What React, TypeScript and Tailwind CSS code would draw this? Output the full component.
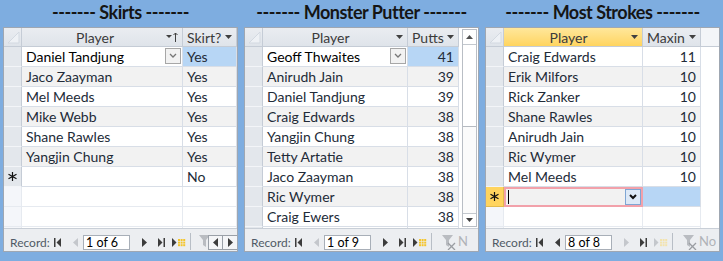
import React from "react";

const font = "font-['Lato','Open_Sans',sans-serif]";

function DownTri({ className = "" }: { className?: string }) {
  return (
    <svg width="7" height="4" viewBox="0 0 7 4" className={className}>
      <path d="M0 0h7L3.5 4z" fill="#404040" />
    </svg>
  );
}

function SortAsc() {
  return (
    <svg width="12" height="10" viewBox="0 0 12 10">
      <path d="M0 3h6L3 6z" fill="#404040" />
      <path d="M9.5 1v9M7.5 3l2-2 2 2" stroke="#404040" strokeWidth="1" fill="none" />
    </svg>
  );
}

function Chevron({ bold = false }: { bold?: boolean }) {
  return (
    <svg width="8" height="6" viewBox="0 0 8 6">
      <path
        d="M1 1l3 3 3-3"
        stroke={bold ? "#111" : "#777"}
        strokeWidth={bold ? 2 : 1.3}
        fill="none"
      />
    </svg>
  );
}

function Corner() {
  return (
    <svg width="17" height="18" viewBox="0 0 17 18">
      <path d="M4 15L15 4v11z" fill="#eef1f5" stroke="#d3d9e1" strokeWidth="1" />
    </svg>
  );
}

function Star() {
  return (
    <svg width="11" height="11" viewBox="0 0 11 11">
      <path d="M5.5 1v9M1.5 3.2l8 4.6M1.5 7.8l8-4.6" stroke="#111" strokeWidth="1.2" />
    </svg>
  );
}

function NavIcon({ kind, on }: { kind: string; on: boolean }) {
  const c = on ? "#3c3c3c" : "#c4c7cc";
  if (kind === "first")
    return (
      <svg width="7" height="9" viewBox="0 0 7 9">
        <rect x="0" y="0" width="1.5" height="9" fill={c} />
        <path d="M7 0v9L2.5 4.5z" fill={c} />
      </svg>
    );
  if (kind === "prev")
    return (
      <svg width="5" height="9" viewBox="0 0 5 9">
        <path d="M5 0v9L0 4.5z" fill={c} />
      </svg>
    );
  if (kind === "next")
    return (
      <svg width="5" height="9" viewBox="0 0 5 9">
        <path d="M0 0v9L5 4.5z" fill={c} />
      </svg>
    );
  if (kind === "last")
    return (
      <svg width="7" height="9" viewBox="0 0 7 9">
        <path d="M0 0v9L4.5 4.5z" fill={c} />
        <rect x="5.5" y="0" width="1.5" height="9" fill={c} />
      </svg>
    );
  const y = on ? "#f4c52c" : "#f3e3ad";
  return (
    <svg width="14" height="9" viewBox="0 0 14 9">
      <path d="M0 0v9L4.5 4.5z" fill={c} />
      {[0, 1, 2].map((r) =>
        [0, 1, 2].map((q) => (
          <rect key={`${r}${q}`} x={6 + q * 2.6} y={1 + r * 2.6} width="2" height="2" fill={y} />
        ))
      )}
    </svg>
  );
}

function Funnel({ x = false }: { x?: boolean }) {
  return (
    <svg width="16" height="16" viewBox="0 0 16 16">
      <path d="M1 1h11L8 6v7l-3-2V6z" fill="#b9bcc1" />
      {x && <path d="M7 9l7 7M14 9l-7 7" stroke="#9a9da2" strokeWidth="1.3" />}
    </svg>
  );
}

function RecordBar({
  text,
  first,
  prev,
  next,
  last,
  add,
  tail,
}: {
  text: string;
  first: boolean;
  prev: boolean;
  next: boolean;
  last: boolean;
  add: boolean;
  tail: React.ReactNode;
}) {
  return (
    <div className="h-[23px] shrink-0 border-t border-[#c9cfd7] bg-[#eceef1] flex items-end pb-[1px] overflow-hidden">
      <span className="ml-[6px] w-[44px] shrink-0 text-[12px] text-[#505a66] leading-[16px] self-center mt-[6px]">
        Record:
      </span>
      <div className="w-[7px] shrink-0 flex self-center mt-[6px]"><NavIcon kind="first" on={first} /></div>
      <div className="w-[5px] shrink-0 ml-[12px] flex self-center mt-[6px]"><NavIcon kind="prev" on={prev} /></div>
      <div className="w-[47px] shrink-0 h-[15px] ml-[5px] bg-white border border-[#a8afb8] text-[12.5px] text-black leading-[13px] pl-[2px]">
        {text}
      </div>
      <div className="w-[5px] shrink-0 ml-[12px] flex self-center mt-[6px]"><NavIcon kind="next" on={next} /></div>
      <div className="w-[7px] shrink-0 ml-[11px] flex self-center mt-[6px]"><NavIcon kind="last" on={last} /></div>
      <div className="w-[14px] shrink-0 ml-[7px] flex self-center mt-[6px]"><NavIcon kind="add" on={add} /></div>
      <div className="w-[1px] shrink-0 h-[17px] ml-[4px] bg-[#b8bec6]" />
      {tail}
    </div>
  );
}

type Cell = { text?: string; right?: boolean; blue?: boolean; combo?: boolean; focus?: boolean };

function DataRow({
  sel,
  cells,
  widths,
  alt,
  extra,
  filler,
}: {
  sel?: "star" | "none";
  cells: Cell[];
  widths: string[];
  alt?: boolean;
  extra?: string;
  filler?: boolean;
}) {
  return (
    <div className="h-[20px] shrink-0 flex">
      <div
        className={`w-[18px] shrink-0 border-r border-b flex items-center justify-center ${
          filler
            ? "bg-[#f4f6fa] border-[#e6eaf0]"
            : "bg-[#e3e7ec] border-r-[#c5ccd6] border-b-[#f3f5f8]"
        }`}
      >
        {sel === "star" ? <Star /> : null}
      </div>
      {cells.map((c, i) => (
        <div
          key={i}
          className={`${widths[i]} shrink-0 border-r border-b ${
            filler ? "border-[#e6eaf0]" : "border-[#d8dee7]"
          } flex items-center relative ${
            c.blue ? "bg-[#b7d6f5]" : alt ? "bg-[#f2f2f2]" : "bg-white"
          } ${c.right ? "justify-end pr-[4px]" : "pl-[4px]"} ${c.focus ? "text-black" : "text-[#222b38]"}`}
        >
          <span className="whitespace-nowrap">{c.text}</span>
          {c.combo && (
            <div className="absolute right-[1px] top-[1px] w-[16px] h-[16px] border border-[#a7a7a7] bg-[#f2f2f2] flex items-center justify-center">
              <Chevron />
            </div>
          )}
        </div>
      ))}
      {extra && <div className={`${extra} shrink-0 bg-white`} />}
    </div>
  );
}

function Header({
  widths,
  labels,
  sortFirst,
  hlFirst,
  extra,
}: {
  widths: string[];
  labels: string[];
  sortFirst?: boolean;
  hlFirst?: boolean;
  extra?: string;
}) {
  return (
    <div className="h-[19px] shrink-0 flex border-b border-[#c5ccd6] bg-gradient-to-b from-[#eaedf1] to-[#dfe4ea] text-[#3b3b3b]">
      <div className="w-[18px] shrink-0 border-r border-[#c5ccd6] flex items-end justify-end overflow-hidden">
        <Corner />
      </div>
      {labels.map((l, i) => (
        <div
          key={l + i}
          className={`${widths[i]} shrink-0 border-r border-[#c5ccd6] flex items-center pr-[4px] ${
            i === 0 && hlFirst ? "bg-gradient-to-b from-[#ffe79a] to-[#ffd45e]" : ""
          }`}
        >
          {i === 0 ? (
            <span className="flex-1 text-center pl-[2px]">{l}</span>
          ) : (
            <span className="flex-1 pl-[4px] whitespace-nowrap overflow-hidden">{l}</span>
          )}
          {i === 0 && sortFirst ? <SortAsc /> : <DownTri />}
        </div>
      ))}
      {extra && <div className={`${extra} shrink-0 bg-[#f3f5f8]`} />}
    </div>
  );
}

function Panel({
  title,
  children,
  bar,
}: {
  title: string;
  children: React.ReactNode;
  bar: React.ReactNode;
}) {
  return (
    <div className="w-[235px] shrink-0 flex flex-col">
      <div className="h-[27px] flex items-center justify-center font-bold text-[18px] tracking-[-0.5px] text-[#151515] leading-none pb-[3px] whitespace-nowrap">
        {title}
      </div>
      <div className="h-[225px] border border-[#9fa7b2] bg-white flex flex-col overflow-hidden text-[14px]">
        <div className="flex-1 flex overflow-hidden">{children}</div>
        {bar}
      </div>
    </div>
  );
}

function Fillers({ widths, n, extra }: { widths: string[]; n: number; extra?: string }) {
  return (
    <>
      {Array.from({ length: n }).map((_, i) => (
        <DataRow key={i} filler cells={widths.map(() => ({}))} widths={widths} extra={extra} />
      ))}
    </>
  );
}

export default function App() {
  const w1 = ["w-[161px]", "w-[54px]"];
  const skirts = ["Daniel Tandjung", "Jaco Zaayman", "Mel Meeds", "Mike Webb", "Shane Rawles", "Yangjin Chung"];

  const w2 = ["w-[145px]", "w-[51px]"];
  const putts: [string, string][] = [
    ["Geoff Thwaites", "41"],
    ["Anirudh Jain", "39"],
    ["Daniel Tandjung", "39"],
    ["Craig Edwards", "38"],
    ["Yangjin Chung", "38"],
    ["Tetty Artatie", "38"],
    ["Jaco Zaayman", "38"],
    ["Ric Wymer", "38"],
    ["Craig Ewers", "38"],
  ];

  const w3 = ["w-[139px]", "w-[58px]"];
  const strokes: [string, string][] = [
    ["Craig Edwards", "11"],
    ["Erik Milfors", "10"],
    ["Rick Zanker", "10"],
    ["Shane Rawles", "10"],
    ["Anirudh Jain", "10"],
    ["Ric Wymer", "10"],
    ["Mel Meeds", "10"],
  ];

  return (
    <div className={`w-[723px] h-[261px] bg-[#7eade0] flex gap-[6px] px-[3px] overflow-hidden ${font}`}>
      <Panel
        title="------- Skirts -------"
        bar={
          <RecordBar
            text="1 of 6"
            first
            prev={false}
            next
            last
            add
            tail={
              <div className="flex items-end ml-[7px]">
                <div className="w-[10px] overflow-hidden self-center mt-[4px]"><Funnel /></div>
                <div className="flex h-[15px] ml-[0px] border border-[#9aa0a8] bg-[#f4f5f7]">
                  <div className="w-[14px] border-r border-[#9aa0a8] flex items-center justify-center"><NavIcon kind="prev" on /></div>
                  <div className="w-[14px] flex items-center justify-center"><NavIcon kind="next" on /></div>
                </div>
              </div>
            }
          />
        }
      >
        <div className="flex-1 flex flex-col">
          <Header widths={w1} labels={["Player", "Skirt?"]} sortFirst />
          {skirts.map((n, i) => (
            <DataRow
              key={n}
              widths={w1}
              alt={i % 2 === 1}
              cells={[
                { text: n, combo: i === 0, focus: i === 0 },
                { text: "Yes", blue: i === 0 },
              ]}
            />
          ))}
          <DataRow sel="star" widths={w1} cells={[{}, { text: "No" }]} />
          <Fillers widths={w1} n={3} />
        </div>
      </Panel>

      <Panel
        title="------- Monster Putter -------"
        bar={
          <RecordBar
            text="1 of 9"
            first
            prev={false}
            next
            last
            add
            tail={
              <div className="flex items-center self-center mt-[5px] ml-[9px]">
                <Funnel x />
                <span className="ml-[1px] text-[13px] text-[#b0b3b8]">N</span>
              </div>
            }
          />
        }
      >
        <div className="w-[214px] shrink-0 flex flex-col">
          <Header widths={w2} labels={["Player", "Putts"]} />
          {putts.map(([n, v], i) => (
            <DataRow
              key={n}
              widths={w2}
              alt={i % 2 === 1}
              cells={[
                { text: n, combo: i === 0, focus: i === 0 },
                { text: v, right: true, blue: i === 0 },
              ]}
            />
          ))}
          <DataRow sel="star" widths={w2} cells={[{}, {}]} />
        </div>
        <div className="w-[19px] shrink-0 bg-white pl-[3px] pr-[1px] pt-[1px] pb-[1px] flex">
          <div className="flex-1 border border-[#b9bec5] flex flex-col bg-[#fbfbfb]">
            <div className="h-[15px] shrink-0 border-b border-[#c3c8ce] bg-white flex items-center justify-center">
              <svg width="7" height="4" viewBox="0 0 7 4"><path d="M0 4h7L3.5 0z" fill="#505050" /></svg>
            </div>
            <div className="h-[82px] shrink-0 border-b border-[#b5bac1] bg-white" />
            <div className="flex-1" />
            <div className="h-[13px] shrink-0 border-t border-[#c3c8ce] bg-white flex items-center justify-center">
              <DownTri />
            </div>
          </div>
        </div>
      </Panel>

      <Panel
        title="------- Most Strokes -------"
        bar={
          <RecordBar
            text="8 of 8"
            first
            prev
            next={false}
            last
            add={false}
            tail={
              <div className="flex items-center self-center mt-[5px] ml-[9px]">
                <Funnel x />
                <span className="ml-[1px] text-[13px] text-[#b0b3b8] whitespace-nowrap">No F</span>
              </div>
            }
          />
        }
      >
        <div className="flex-1 flex flex-col">
          <Header widths={w3} labels={["Player", "Maxin"]} hlFirst extra="w-[18px]" />
          {strokes.map(([n, v], i) => (
            <DataRow
              key={n}
              widths={w3}
              alt={i % 2 === 1}
              extra="w-[18px]"
              cells={[{ text: n }, { text: v, right: true }]}
            />
          ))}
          <div className="h-[20px] shrink-0 flex">
            <div className="w-[18px] shrink-0 bg-[#ffd45e] border-r border-b border-[#e3bb4c] flex items-center justify-center">
              <Star />
            </div>
            <div className="w-[139px] shrink-0 border-2 border-[#f2a1aa] bg-[#f2f2f2] relative flex items-center pl-[2px]">
              <div className="w-[1px] h-[14px] bg-black" />
              <div className="absolute right-[0px] top-[0px] w-[16px] h-[16px] border border-[#7fa6d4] bg-[#dde9f7] flex items-center justify-center">
                <Chevron bold />
              </div>
            </div>
            <div className="w-[58px] shrink-0 bg-[#b7d6f5] border-r border-b border-[#d8dee7]" />
            <div className="w-[18px] shrink-0 bg-white" />
          </div>
          <Fillers widths={w3} n={2} extra="w-[18px]" />
        </div>
      </Panel>
    </div>
  );
}
